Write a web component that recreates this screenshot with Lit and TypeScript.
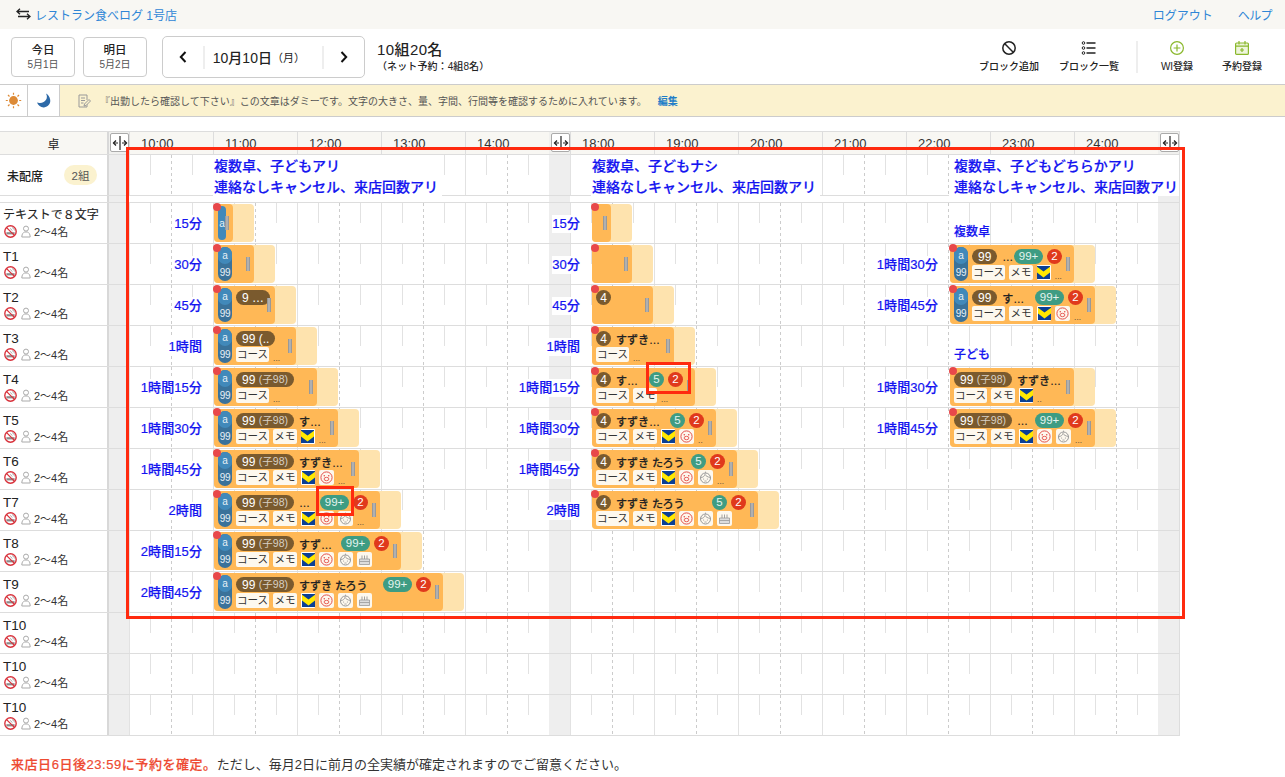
import { LitElement, html, css, nothing } from "lit";
import { customElement } from "lit/decorators.js";

const icoSmoke = html`<svg class="ic13" viewBox="0 0 13 13"><path d="M2.400 7.200h8.200v2.200H2.400z" fill="#8a8a8a"/><path d="M8.200 2.600c1.600.4 1.200 2 2.600 2.600M6.400 3.400c1 .5.800 1.700 2 2.300" fill="none" stroke="#999" stroke-width=".9"/><circle cx="6.500" cy="6.500" r="5.700" fill="none" stroke="#d8323c" stroke-width="1.400"/><path d="M2.600 2.600l7.800 7.800" stroke="#d8323c" stroke-width="1.300"/></svg>`;
const icoPerson = html`<svg class="ic-p" viewBox="0 0 10 13"><circle cx="5" cy="3.600" r="2.500" fill="none" stroke="#aaa" stroke-width="1"/><path d="M.8 12c0-3.200 1.600-4.600 2.800-5h2.800c1.200.4 2.800 1.800 2.800 5z" fill="none" stroke="#aaa" stroke-width="1"/></svg>`;
const icoT = html`<span class="chipicon t"><svg viewBox="0 0 13 13"><rect width="13" height="13" fill="#0b3f94"/><path d="M0 .8 6.500 5.600 13 .8v5.600L6.500 11.500 0 6.400z" fill="#ffe800"/></svg></span>`;
const icoFace = html`<span class="chipicon"><svg viewBox="0 0 15 15"><circle cx="7.500" cy="7.500" r="5.600" fill="none" stroke="#e4504a" stroke-width="1"/><ellipse cx="7.500" cy="9" rx="2.400" ry="1.700" fill="none" stroke="#e4504a" stroke-width=".9"/><circle cx="5.300" cy="5.800" r=".8" fill="#e4504a"/><circle cx="9.700" cy="5.800" r=".8" fill="#e4504a"/><path d="M6.700 9h.1M8.200 9h.1" stroke="#e4504a" stroke-width="1"/></svg></span>`;
const icoBaby = html`<span class="chipicon"><svg viewBox="0 0 15 15"><circle cx="7.500" cy="8" r="5" fill="none" stroke="#999" stroke-width="1"/><path d="M2.600 7.400c2.400.2 3.600-1 4.400-3 .8 1.600 2.800 2.800 5.400 3" fill="none" stroke="#999" stroke-width=".9"/><circle cx="5.600" cy="9" r=".6" fill="#999"/><circle cx="9.400" cy="9" r=".6" fill="#999"/><path d="M6.400 11h2.200M7.500 1.600v1.800" stroke="#999" stroke-width=".8"/></svg></span>`;
const icoCake = html`<span class="chipicon"><svg viewBox="0 0 15 15"><path d="M2.500 7h10v5.500h-10z" fill="#ddd" stroke="#999" stroke-width=".8"/><path d="M2.500 9.500h10" stroke="#999" stroke-width=".8"/><path d="M5 3.500V7M7.500 3.500V7M10 3.500V7" stroke="#999" stroke-width=".9"/></svg></span>`;

const H1 = 214 - 109, H2 = 592 - 109, H3 = 950 - 109;

type Card = {
  row: number; left: number; dur: number; pill?: "a" | "full"; label?: string;
  brown?: string; kid?: boolean; circle?: boolean; name?: string; green?: string; red?: string; chips?: number; more?: string;
};

const c1: Card[] = [
  { row: 0, left: H1, dur: 15, pill: "a", label: "15分" },
  { row: 1, left: H1, dur: 30, pill: "full", label: "30分" },
  { row: 2, left: H1, dur: 45, pill: "full", label: "45分", brown: "9 …" },
  { row: 3, left: H1, dur: 60, pill: "full", label: "1時間", brown: "99 (..", chips: 1, more: "..." },
  { row: 4, left: H1, dur: 75, pill: "full", label: "1時間15分", brown: "99", kid: true, chips: 1, more: "..." },
  { row: 5, left: H1, dur: 90, pill: "full", label: "1時間30分", brown: "99", kid: true, name: "す…", chips: 3, more: "..." },
  { row: 6, left: H1, dur: 105, pill: "full", label: "1時間45分", brown: "99", kid: true, name: "すずき…", chips: 4, more: "..." },
  { row: 7, left: H1, dur: 120, pill: "full", label: "2時間", brown: "99", kid: true, name: "…", green: "99+", red: "2", chips: 5, more: "..." },
  { row: 8, left: H1, dur: 135, pill: "full", label: "2時間15分", brown: "99", kid: true, name: "すず…", green: "99+", red: "2", chips: 6 },
  { row: 9, left: H1, dur: 165, pill: "full", label: "2時間45分", brown: "99", kid: true, name: "すずき たろう", green: "99+", red: "2", chips: 6 },
];
const c2: Card[] = [
  { row: 0, left: H2, dur: 15, label: "15分" },
  { row: 1, left: H2, dur: 30, label: "30分" },
  { row: 2, left: H2, dur: 45, label: "45分", circle: true },
  { row: 3, left: H2, dur: 60, label: "1時間", circle: true, name: "すずき…", chips: 1, more: "..." },
  { row: 4, left: H2, dur: 75, label: "1時間15分", circle: true, name: "す…", green: "5", red: "2", chips: 2, more: "..." },
  { row: 5, left: H2, dur: 90, label: "1時間30分", circle: true, name: "すずき…", green: "5", red: "2", chips: 4, more: ".." },
  { row: 6, left: H2, dur: 105, label: "1時間45分", circle: true, name: "すずき たろう", green: "5", red: "2", chips: 5, more: "..." },
  { row: 7, left: H2, dur: 120, label: "2時間", circle: true, name: "すずき たろう", green: "5", red: "2", chips: 6 },
];
const c3: Card[] = [
  { row: 1, left: H3, dur: 90, pill: "full", label: "1時間30分", brown: "99", name: "…", green: "99+", red: "2", chips: 3, more: "..." },
  { row: 2, left: H3, dur: 105, pill: "full", label: "1時間45分", brown: "99", name: "す…", green: "99+", red: "2", chips: 4, more: "..." },
  { row: 4, left: H3, dur: 90, label: "1時間30分", brown: "99", kid: true, name: "すずき…", chips: 3, more: ".." },
  { row: 5, left: H3, dur: 105, label: "1時間45分", brown: "99", kid: true, name: "…", green: "99+", red: "2", chips: 5, more: "..." },
];

const all = [...c1, ...c2, ...c3];
const names = ["テキストで８文字", "T1", "T2", "T3", "T4", "T5", "T6", "T7", "T8", "T9", "T10", "T10", "T10"];
const hours1 = ["10:00", "11:00", "12:00", "13:00", "14:00"];
const hours2 = ["18:00", "19:00", "20:00", "21:00", "22:00", "23:00", "24:00"];

const handleIcon = html`<svg viewBox="0 0 16 16" width="16" height="16"><path d="M8 1v14" stroke="#222" stroke-width="1.200"/><path d="M1.500 8h4.500M10 8h4.500" stroke="#222" stroke-width="1.200"/><path d="M4 5.500 1.500 8 4 10.500M12 5.500 14.500 8 12 10.500" fill="none" stroke="#222" stroke-width="1.300"/></svg>`;

@customElement("app-root")
export class AppRoot extends LitElement {
  static styles = css`
    :host { display: block; position: relative; width: 1285px; height: 777px; overflow: hidden; background: #fff; color: #222;
      font-family: "Liberation Sans", "Noto Sans CJK JP", sans-serif; font-size: 12px; }
    * { box-sizing: border-box; }
    .topbar { height: 29px; background: #f8f7f3; display: flex; align-items: center; padding: 0 13px 1px 16px; color: #2f86d6; }
    .topbar svg { width: 15px; height: 12px; margin-right: 5px; }
    .topbar .store { font-size: 12px; margin-left: -1px; }
    .topbar .right { margin-left: auto; display: flex; gap: 25px; }
    .topbar .help { letter-spacing: -.6px; }
    .toolbar { height: 55px; display: flex; align-items: flex-start; padding: 8px 13px 0 11px; }
    .day { width: 64px; height: 40px; border: 1px solid #ccc; border-radius: 4px; margin-right: 8px; display: flex; flex-direction: column; align-items: center; justify-content: center; }
    .day b { font-size: 11.5px; font-weight: 500; line-height: 16px; }
    .day span { font-size: 10px; color: #555; line-height: 14px; }
    .nav { width: 203px; height: 42px; margin: -1px 0 0 7px; border: 1px solid #ccc; border-radius: 5px; display: flex; align-items: center; }
    .nav .arrow { width: 40px; display: flex; justify-content: center; }
    .nav .arrow svg { width: 8px; height: 12px; }
    .nav .date { width: 122px; height: 23px; border-left: 2px solid #eee; border-right: 2px solid #eee; padding: 0 0 1px 8px; display: flex; align-items: center; font-size: 14px; font-weight: 500; }
    .nav .date small { font-size: 11px; font-weight: 400; }
    .count { margin-left: 12px; }
    .count .big { font-size: 15px; letter-spacing: .4px; font-weight: 500; line-height: 20px; margin-top: 3px; }
    .count .sub { font-size: 10px; font-weight: 500; line-height: 14px; white-space: nowrap; letter-spacing: .1px; }
    .tools { margin-left: auto; display: flex; align-items: flex-start; }
    .tool { width: 60px; display: flex; flex-direction: column; align-items: center; font-size: 10px; font-weight: 500; white-space: nowrap; padding-top: 3px; }
    .tool svg { width: 16px; height: 16px; margin-bottom: 2px; }
    .tool + .tool { margin-left: 20px; }
    .tool.g + .tool.g { margin-left: 5px; }
    .vdiv { width: 2px; height: 32px; background: #eee; margin: 4px 9px 0 17px; }
    .notice { height: 33px; border-top: 1px solid #ccc; border-bottom: 1px solid #ccc; display: flex; }
    .cell { display: flex; align-items: center; justify-content: center; border-right: 1px solid #ccc; }
    .cell.sun { width: 28px; }
    .cell.moon { width: 32px; }
    .cell svg { width: 17px; height: 17px; }
    .msg { flex: 1; background: #fbf2cf; display: flex; align-items: center; padding-left: 17px; font-size: 10px; color: #555; }
    .msg svg { width: 14px; height: 14px; margin-right: 9px; }
    .msg a { color: #1f7ec8; font-weight: 700; margin-left: 11px; }

    .board { margin-top: 14px; width: 1180px; border-top: 1px solid #ddd; }
    .line { display: flex; border-bottom: 1px solid #ddd; }
    .line.head { height: 23px; }
    .line.sec { height: 41px; }
    .line.gap { height: 7px; }
    .line.row { height: 41px; }
    .who { width: 109px; flex: none; border-right: 2px solid #d8d8d8; }
    .head .who { background: #f8f7f3; display: flex; align-items: center; justify-content: center; }
    .sec .who { display: flex; align-items: center; padding-left: 7px; font-weight: 500; }
    .badge { margin-left: 21px; width: 33px; height: 20px; border-radius: 10px; background: #fbf2cf; display: flex; align-items: center; justify-content: center; font-size: 11.5px; font-weight: 400; color: #555; }
    .row .who { padding: 4px 0 0 3px; }
    .tn { font-size: 13.5px; line-height: 17px; height: 16px; }
    .tn.long { font-size: 12px; -webkit-text-stroke: .15px #222; }
    .cap { display: flex; align-items: center; height: 16px; font-size: 11px; color: #333; }
    .ic13 { width: 13px; height: 13px; margin-left: 1px; }
    .ic-p { width: 10px; height: 13px; margin: 0 3px 0 4px; }
    .lane { flex: 1; display: flex; position: relative; border-right: 1px solid #ddd; }
    .grey { background: #eee; flex: none; width: 21px; position: relative; }
    .grey.first { width: 20px; }
    .hr { width: 84px; flex: none;
      background:
        linear-gradient(#e2e2e2, #e2e2e2) 0 0/1px 100% no-repeat,
        linear-gradient(#e2e2e2, #e2e2e2) 21px 0/1px 20px no-repeat,
        linear-gradient(#e2e2e2, #e2e2e2) 63px 0/1px 20px no-repeat,
        repeating-linear-gradient(#ccc 0 3px, transparent 3px 6px) 42px 0/1px 100% no-repeat; }
    .head .lane { background: #f8f7f3; }
    .head .grey { background: #f0f0ee; }
    .head .hr { padding: 3px 0 0 12px; font-size: 13px; line-height: 18px; color: #333; background: linear-gradient(#ddd, #ddd) 0 0/1px 100% no-repeat; }
    .gap .hr { background: none; }
    .handlebtn { position: absolute; right: 0; top: 1px; width: 19px; height: 19px; background: #fff; border: 1px solid #aaa; border-radius: 2px; display: flex; align-items: center; justify-content: center; }
    .first .handlebtn { left: 1px; right: auto; }

    .seclabel { position: absolute; top: 0; height: 41px; background: #fff; color: #1414f0; font-size: 14px; font-weight: 500; line-height: 21px; white-space: nowrap; padding: 1px 0 0 1px; -webkit-text-stroke: .2px #1414f0; }
    .seclabel.far { padding-left: 5px; }
    .tlabel { position: absolute; top: 12px; height: 18px; line-height: 18px; background: #fff; color: #1414f0; font-size: 13px; font-weight: 500; white-space: nowrap; -webkit-text-stroke: .2px #1414f0; letter-spacing: .1px; }
    .grouplabel { position: absolute; top: 20px; line-height: 18px; color: #1414f0; font-size: 12px; font-weight: 500; -webkit-text-stroke: .2px #1414f0; }

    .res { position: absolute; top: 1px; height: 38px; background: #fee3ae; border-radius: 4px; }
    .dark { position: relative; height: 38px; background: #ffb856; border-radius: 4px; display: flex; align-items: flex-start; padding-left: 4px; }
    .dot { position: absolute; left: -1px; top: -1px; width: 8px; height: 8px; border-radius: 50%; background: #e8484a; z-index: 1; }
    .pill { flex: none; width: 14px; height: 34px; margin: 2px 4px 0 0; border-radius: 7px; background: #3a729a; color: #e8f0f6; font-size: 10px; display: flex; flex-direction: column; align-items: center; }
    .pill .a { width: 14px; height: 17px; border-radius: 7px; background: #4189ba; display: flex; align-items: center; justify-content: center; line-height: 1; }
    .pill .n { height: 17px; display: flex; align-items: center; letter-spacing: -.2px; line-height: 1; }
    .pill.slim { width: 8px; background: #4189ba; justify-content: center; }
    .main { flex: 1; min-width: 0; margin-top: 4px; padding-right: 12px; }
    .top { display: flex; align-items: center; height: 15px; }
    .brown { flex: none; height: 15px; border-radius: 8px; background: #7a5a2e; color: #fff; font-size: 12px; padding: 0 6px; display: flex; align-items: center; white-space: nowrap; line-height: 1; }
    .brown small { font-size: 10.5px; color: #d8d0c4; margin-left: 3.5px; }
    .brown.circle { width: 15px; padding: 0; justify-content: center; border-radius: 50%; }
    .name { margin-left: 5px; font-size: 11px; font-weight: 500; color: #222; white-space: nowrap; -webkit-text-stroke: .2px #222; }
    .bd { flex: none; height: 15px; border-radius: 8px; color: #fff; font-size: 11.5px; display: flex; align-items: center; justify-content: center; line-height: 1; }
    .green { background: #3e9c83; color: #e4f4ef; width: 29px; margin-left: auto; }
    .green.one { width: 15px; }
    .redb { background: #e0391c; width: 15px; margin-left: 4px; }
    .chips { display: flex; align-items: flex-end; gap: 4px; margin-top: 1px; height: 15px; }
    .chip { height: 15px; border-radius: 2px; background: #fdf8ee; color: #333; font-size: 10.5px; display: flex; align-items: center; justify-content: center; line-height: 1; }
    .chip.c1 { width: 33px; }
    .chip.c2 { width: 24px; }
    .chipicon { width: 15px; height: 15px; border-radius: 2px; background: #fdf8ee; display: block; flex: none; }
    .chipicon svg { display: block; width: 15px; height: 15px; }
    .chipicon.t { width: 14px; background: #fff; border-radius: 1px; padding: 1px .5px; }
    .chipicon.t svg { width: 13px; height: 13px; }
    .more { font-size: 8px; line-height: 7px; color: #333; letter-spacing: .2px; }
    .grip { position: absolute; right: 4px; top: 12px; width: 4px; height: 14px; background: #b0b0b0; border-left: 1.5px solid #999; border-right: 1.5px solid #999; }

    .foot { margin: 20px 0 0 11px; font-size: 13px; line-height: 18px; color: #333; }
    .foot b { color: #ee4a32; font-weight: 500; letter-spacing: .55px; -webkit-text-stroke: .2px #ee4a32; }
    .frame { position: absolute; border: 3px solid #ff2a0f; pointer-events: none; z-index: 5; }
    .f1 { left: 126px; top: 147px; width: 1059px; height: 472px; }
    .f2 { left: 316px; top: 486px; width: 38px; height: 30px; }
    .f3 { left: 646px; top: 362px; width: 45px; height: 32px; }
  `;

  private cells() {
    return html`
      <div class="grey first"></div>
      ${hours1.map(() => html`<div class="hr"></div>`)}
      <div class="grey"></div>
      ${hours2.map(() => html`<div class="hr"></div>`)}
      <div class="grey"></div>`;
  }

  private chips(n: number) {
    const items = [
      html`<span class="chip c1">コース</span>`, html`<span class="chip c2">メモ</span>`,
      icoT, icoFace, icoBaby, icoCake,
    ];
    return items.slice(0, n);
  }

  private card(c: Card) {
    const dark = c.dur * 1.4 - 2;
    const green1 = c.green && c.green.length === 1;
    const hasTop = c.brown || c.circle;
    return html`<div class="res" style="left:${c.left}px;width:${dark + 21}px">
      <div class="dark" style="width:${dark}px">
        <i class="dot"></i>
        ${c.pill === "a" ? html`<div class="pill slim">a</div>` : nothing}
        ${c.pill === "full" ? html`<div class="pill"><span class="a">a</span><span class="n">99</span></div>` : nothing}
        ${hasTop ? html`<div class="main">
          <div class="top">
            ${c.circle ? html`<span class="brown circle">4</span>` : html`<span class="brown">${c.brown}${c.kid ? html`<small>(子98)</small>` : nothing}</span>`}
            ${c.name ? html`<span class="name">${c.name}</span>` : nothing}
            ${c.green ? html`<span class="bd green ${green1 ? "one" : ""}">${c.green}</span><span class="bd redb">${c.red}</span>` : nothing}
          </div>
          ${c.chips ? html`<div class="chips">${this.chips(c.chips)}${c.more ? html`<span class="more">${c.more}</span>` : nothing}</div>` : nothing}
        </div>` : nothing}
        <i class="grip"></i>
      </div>
    </div>`;
  }

  private labelFor(c: Card) {
    const edge = c.left === H1 ? 202 : c.left === H2 ? 580 : 938;
    return html`<div class="tlabel" style="right:${1179 - edge}px">${c.label}</div>`;
  }

  render() {
    const btn = html`<div class="handlebtn">${handleIcon}</div>`;
    return html`
      <div class="topbar">
        <svg viewBox="0 0 15 12"><path d="M1 3.500h12M4 .8 1 3.500 4 6.200M14 8.500H2M11 5.800l3 2.700-3 2.700" fill="none" stroke="#222" stroke-width="1.300"/></svg>
        <span class="store">レストラン食べログ 1号店</span>
        <div class="right"><span>ログアウト</span><span class="help">ヘルプ</span></div>
      </div>
      <div class="toolbar">
        <div class="day"><b>今日</b><span>5月1日</span></div>
        <div class="day"><b>明日</b><span>5月2日</span></div>
        <div class="nav">
          <div class="arrow"><svg viewBox="0 0 8 12"><path d="M6.500 1 1.800 6l4.700 5" fill="none" stroke="#111" stroke-width="2"/></svg></div>
          <div class="date">10月10日<small>（月）</small></div>
          <div class="arrow"><svg viewBox="0 0 8 12"><path d="M1.500 1l4.700 5-4.700 5" fill="none" stroke="#111" stroke-width="2"/></svg></div>
        </div>
        <div class="count"><div class="big">10組20名</div><div class="sub">（ネット予約：4組8名）</div></div>
        <div class="tools">
          <div class="tool"><svg viewBox="0 0 16 16"><circle cx="8" cy="8" r="6.200" fill="none" stroke="#222" stroke-width="1.500"/><path d="M3.800 3.800l8.400 8.400" stroke="#222" stroke-width="1.500"/></svg>ブロック追加</div>
          <div class="tool"><svg viewBox="0 0 16 16"><path d="M5.500 3h9M5.500 8h9M5.500 13h9" stroke="#222" stroke-width="1.300"/><circle cx="2.500" cy="3" r="1.300" fill="none" stroke="#222"/><circle cx="2.500" cy="8" r="1.300" fill="none" stroke="#222"/><circle cx="2.500" cy="13" r="1.300" fill="none" stroke="#222"/></svg>ブロック一覧</div>
          <div class="vdiv"></div>
          <div class="tool g"><svg viewBox="0 0 16 16"><circle cx="8" cy="8" r="6.400" fill="none" stroke="#8ab82c" stroke-width="1.200"/><path d="M8 4.600v6.800M4.600 8h6.800" stroke="#8ab82c" stroke-width="1.200"/></svg>WI登録</div>
          <div class="tool g"><svg viewBox="0 0 16 16"><rect x="1.600" y="3" width="12.800" height="11.400" rx="1" fill="#eef5dc" stroke="#8ab82c" stroke-width="1.200"/><path d="M1.600 6.200h12.800M5 1v3.400M11 1v3.400M8 8v4M6 10h4" stroke="#8ab82c" stroke-width="1.200"/></svg>予約登録</div>
        </div>
      </div>
      <div class="notice">
        <div class="cell sun"><svg viewBox="0 0 17 17"><circle cx="8.500" cy="8.500" r="4.400" fill="#dd8a36"/><path d="M8.500 .8v2M8.500 14.200v2M.8 8.500h2M14.200 8.500h2M3 3l1.500 1.500M12.500 12.500 14 14M3 14l1.500-1.500M12.500 4.500 14 3" stroke="#dd8a36" stroke-width="1.200"/></svg></div>
        <div class="cell moon"><svg viewBox="0 0 17 17"><path d="M11 1.500c2.600 4.600-.6 9.800-6.600 9.400L2 10.600C3.200 13.800 6 15.600 9 15.400c4.200-.4 6.800-3.800 6.200-7.600-.4-2.800-2-5.200-4.200-6.300z" fill="#2e6aa8"/></svg></div>
        <div class="msg"><svg viewBox="0 0 14 14"><path d="M2 1h8v5M10 10v3H2V1M4 4h4M4 6.500h4M4 9h2.500" fill="none" stroke="#999" stroke-width="1"/><path d="M7 12l.5-2L12 5.500l1.500 1.500L9 11.500z" fill="#fbf2cf" stroke="#999" stroke-width="1"/></svg><span>『出勤したら確認して下さい』この文章はダミーです。文字の大きさ、量、字間、行間等を確認するために入れています。</span><a>編集</a></div>
      </div>
      <div class="board">
        <div class="line head"><div class="who">卓</div><div class="lane">
          <div class="grey first">${btn}</div>
          ${hours1.map((t) => html`<div class="hr">${t}</div>`)}
          <div class="grey">${btn}</div>
          ${hours2.map((t) => html`<div class="hr">${t}</div>`)}
          <div class="grey">${btn}</div>
        </div></div>
        <div class="line sec"><div class="who">未配席<span class="badge">2組</span></div><div class="lane">
          ${this.cells()}
          <div class="seclabel" style="left:104px;width:229px">複数卓、子どもアリ<br />連絡なしキャンセル、来店回数アリ</div>
          <div class="seclabel" style="left:482px;width:229px">複数卓、子どもナシ<br />連絡なしキャンセル、来店回数アリ</div>
          <div class="seclabel far" style="left:840px;width:230px">複数卓、子どもどちらかアリ<br />連絡なしキャンセル、来店回数アリ</div>
        </div></div>
        <div class="line gap"><div class="who"></div><div class="lane">${this.cells()}</div></div>
        ${names.map((n, i) => html`<div class="line row">
          <div class="who">
            <div class="tn ${n.length > 4 ? "long" : ""}">${n}</div>
            <div class="cap">${icoSmoke}${icoPerson}2〜4名</div>
          </div>
          <div class="lane">
            ${this.cells()}
            ${i === 0 ? html`<div class="grouplabel" style="left:845px">複数卓</div>` : nothing}
            ${i === 3 ? html`<div class="grouplabel" style="left:845px">子ども</div>` : nothing}
            ${all.filter((c) => c.row === i).map((c) => html`${this.labelFor(c)}${this.card(c)}`)}
          </div>
        </div>`)}
      </div>
      <div class="foot"><b>来店日6日後23:59に予約を確定。</b>ただし、毎月2日に前月の全実績が確定されますのでご留意ください。</div>
      <div class="frame f1"></div>
      <div class="frame f2"></div>
      <div class="frame f3"></div>
    `;
  }
}
